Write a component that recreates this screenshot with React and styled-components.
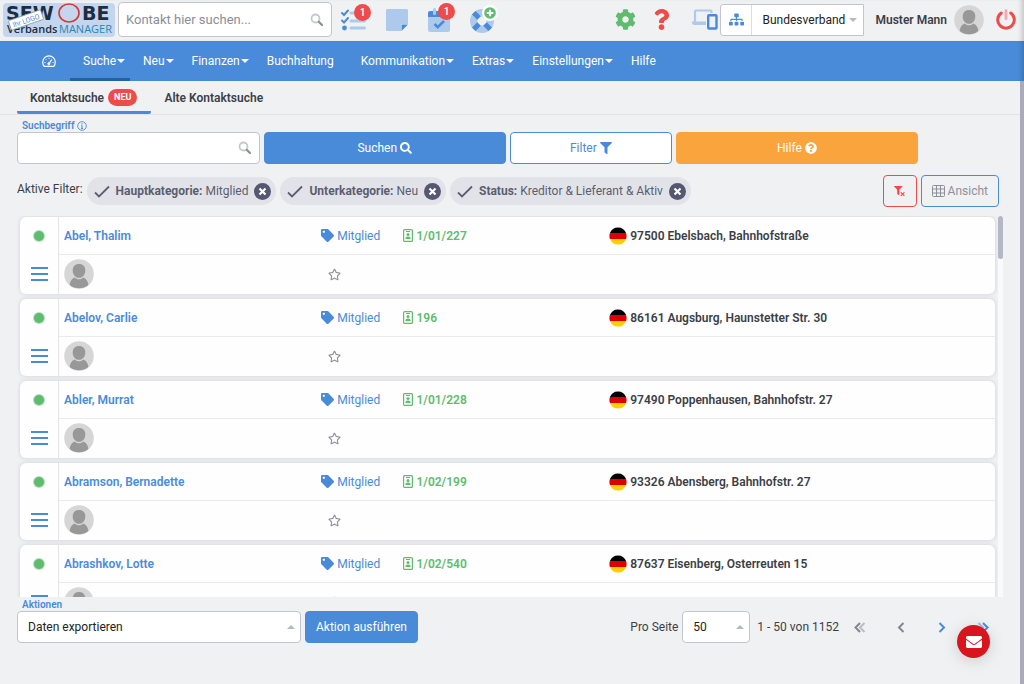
import React from "react";
import styled, { createGlobalStyle, css, ThemeProvider } from "styled-components";
import {
  FaCog,
  FaEnvelope,
  FaFilter,
  FaQuestion,
  FaQuestionCircle,
  FaRegStar,
  FaSearch,
  FaSitemap,
  FaTag,
} from "react-icons/fa";

const theme = {
  blue: "#4a8bd9",
  lightBlue: "#adc9eb",
  darkBlue: "#2560a3",
  red: "#ee4b4b",
  green: "#5fbc6e",
  orange: "#f9a43d",
  page: "#f0f1f3",
  text: "#3c3f46",
  muted: "#5b5e70",
  border: "#c3c4ce",
};

const GlobalStyle = createGlobalStyle`
  * {
    box-sizing: border-box;
  }
  body {
    margin: 0;
    background: #f0f1f3;
    color: #3c3f46;
    font-family: Roboto, "Liberation Sans", sans-serif;
    font-size: 12px;
    line-height: 16px;
  }
  button, input, select {
    font: inherit;
    color: inherit;
    margin: 0;
  }
  button {
    border: 0;
    padding: 0;
    background: none;
    cursor: pointer;
  }
  a {
    color: inherit;
    text-decoration: none;
  }
  svg {
    display: block;
    flex: none;
  }
`;

const Page = styled.div`
  display: flex;
  flex-direction: column;
  height: 100vh;
  overflow: hidden;
`;

/* top bar */

const TopBar = styled.header`
  display: flex;
  align-items: center;
  gap: 3px;
  height: 41px;
  flex: none;
  padding: 0 8px 2px 3px;
  box-shadow: inset -5px 0 5px -3px rgba(0, 0, 0, 0.2);
`;

const SearchBox = styled.div`
  display: flex;
  align-items: center;
  height: ${(props) => (props.$large ? "35px" : "32px")};
  width: ${(props) => (props.$large ? "214px" : "auto")};
  padding: 0 7px;
  border: 1px solid ${(props) => props.theme.border};
  border-radius: 4px;
  background: white;
  font-size: 13px;
`;

const SearchInput = styled.input`
  flex: 1;
  min-width: 0;
  border: 0;
  padding: 0;
  outline: 0;
  background: none;
  &::placeholder {
    color: #8b8e99;
    opacity: 1;
  }
`;

const Shortcuts = styled.div`
  display: flex;
  align-items: center;
  gap: 20px;
  margin-left: 6px;
`;

const Shortcut = styled.button`
  position: relative;
`;

const Count = styled.span`
  position: absolute;
  top: -5px;
  right: -5px;
  width: 17px;
  height: 17px;
  border-radius: 50%;
  background: ${(props) => props.theme.red};
  color: white;
  font-size: 10px;
  font-weight: 600;
  line-height: 17px;
  text-align: center;
`;

const Account = styled.div`
  display: flex;
  align-items: center;
  margin-left: auto;
`;

const Tool = styled.button`
  color: ${(props) => props.theme[props.$color]};
  margin-right: ${(props) => props.$space};
`;

const UnitPicker = styled.div`
  display: flex;
  height: 32px;
  border: 1px solid ${(props) => props.theme.border};
  border-radius: 3px 0 0 3px;
  background: white;
`;

const UnitButton = styled.button`
  display: flex;
  align-items: center;
  justify-content: center;
  width: 31px;
  border-right: 1px solid #dcdde3;
  color: ${(props) => props.theme.blue};
`;

const SelectBox = styled.div`
  position: relative;
  width: ${(props) => props.$width};
  max-width: 100%;
  &::after {
    content: "";
    position: absolute;
    right: 6px;
    top: 50%;
    margin-top: -2px;
    border: 4px solid transparent;
    border-width: ${(props) => (props.$up ? "0 4px 4px" : "4px 4px 0")};
    border-top-color: #b5b7c2;
    border-bottom-color: #b5b7c2;
    pointer-events: none;
  }
`;

const Select = styled.select`
  appearance: none;
  width: 100%;
  height: ${(props) => (props.$plain ? "30px" : "32px")};
  padding: 0 16px 0 10px;
  border: ${(props) => (props.$plain ? "0" : "1px solid " + props.theme.border)};
  border-radius: 4px;
  background: white;
  color: #222;
`;

const UserName = styled.a`
  margin: 0 7px 0 11px;
  font-weight: 600;
`;

/* navigation */

const Nav = styled.nav`
  display: flex;
  flex: none;
  height: 40px;
  padding-left: 29px;
  background: ${(props) => props.theme.blue};
  color: white;
  box-shadow: inset -5px 0 5px -3px rgba(0, 0, 0, 0.2);
`;

const NavLink = styled.a`
  display: flex;
  align-items: center;
  padding: 0 5px 0 13px;
  ${(props) =>
    props.$active &&
    css`
      box-shadow: inset 0 -3px 0 ${props.theme.darkBlue};
    `};
  &::after {
    content: "";
    margin-left: 1px;
    border: 4px solid transparent;
    border-bottom-width: 0;
    border-top-color: ${(props) => (props.$menu ? "white" : "transparent")};
  }
`;

const Body = styled.div`
  display: flex;
  flex: 1;
  min-height: 0;
`;

const PageScroll = styled.div`
  flex: none;
  width: 4px;
  background: #a9abb8;
`;

const Content = styled.div`
  display: flex;
  flex-direction: column;
  flex: 1;
  min-width: 0;
`;

const Tabs = styled.div`
  display: flex;
  flex: none;
  height: 34px;
  padding-left: 17px;
  border-bottom: 1px solid #e2e3e8;
`;

const Tab = styled.a`
  display: flex;
  align-items: center;
  gap: 4px;
  padding: 3px 14px 0 13px;
  font-weight: 600;
  border-bottom: 3px solid ${(props) => (props.$active ? props.theme.blue : "transparent")};
  border-radius: 2px;
`;

const NewBadge = styled.span`
  padding: 0 6px;
  border-radius: 9px;
  background: ${(props) => props.theme.red};
  color: white;
  font-size: 9px;
  font-weight: 700;
  line-height: 17px;
`;

/* search form */

const Main = styled.main`
  display: flex;
  flex-direction: column;
  flex: 1;
  min-height: 0;
  padding: 5px 17px 0;
`;

const Label = styled.label`
  display: flex;
  align-items: center;
  gap: 3px;
  padding-left: 5px;
  color: ${(props) => props.theme.blue};
  font-size: 10px;
  font-weight: 600;
  line-height: 12px;
`;

const SearchForm = styled.form`
  display: grid;
  grid-template-columns: 3fr 3fr 2fr 3fr 1fr;
  column-gap: 4px;
`;

const Button = styled.button`
  display: flex;
  align-items: center;
  justify-content: center;
  gap: 3px;
  height: 32px;
  padding: 0 10px;
  border: 1px solid ${(props) => props.theme[props.$border || props.$fill]};
  border-radius: 4px;
  background: ${(props) => (props.$fill ? props.theme[props.$fill] : "white")};
  color: ${(props) => (props.$color ? props.theme[props.$color] : "white")};
`;

const GhostButton = styled(Button)`
  background: transparent;
  color: #8d909b;
`;

const FilterRow = styled.div`
  display: flex;
  align-items: center;
  gap: 4px;
  margin: 11px 4px 9px 0;
`;

const FilterTitle = styled.span`
  padding-bottom: 4px;
`;

const Spacer = styled.div`
  flex: 1;
`;

const Chip = styled.span`
  display: flex;
  align-items: center;
  gap: 6px;
  height: 28px;
  padding: 0 5px 0 7px;
  border-radius: 14px;
  background: #e2e3e9;
  color: ${(props) => props.theme.muted};
  b {
    font-weight: 700;
  }
`;

/* contact list */

const ListArea = styled.div`
  display: flex;
  flex: 1;
  min-height: 0;
  gap: 3px;
  overflow: hidden;
`;

const ListTrack = styled.div`
  width: 5px;
  background: #fafafb;
`;

const ListThumb = styled.div`
  height: 43px;
  border-radius: 3px;
  background: #b5b7c4;
`;

const ContactList = styled.ul`
  flex: 1;
  min-width: 0;
  margin: 0;
  padding: 1px 0 0 3px;
  list-style: none;
`;

const Card = styled.li`
  display: flex;
  height: 77px;
  margin-bottom: 5px;
  border-radius: 6px;
  background: #fefefe;
  box-shadow: 0 0 4px rgba(60, 65, 90, 0.18);
`;

const CardSide = styled.div`
  display: grid;
  grid-template-rows: 37px 40px;
  justify-items: center;
  align-items: center;
  width: 39px;
  border-right: 1px solid #e4e5e9;
`;

const Status = styled.span`
  width: 10px;
  height: 10px;
  border-radius: 50%;
  background: ${(props) => props.theme.green};
  box-shadow: 0 0 0 1px #b4dfbb;
`;

const MenuButton = styled.button`
  width: 17px;
  height: 14px;
  border-top: 2px solid ${(props) => props.theme.blue};
  border-bottom: 2px solid ${(props) => props.theme.blue};
  background: linear-gradient(${(props) => props.theme.blue}, ${(props) => props.theme.blue}) center / 100% 2px no-repeat;
`;

const CardMain = styled.div`
  flex: 1;
  min-width: 0;
`;

const CardRow = styled.div`
  display: grid;
  grid-template-columns: 50fr 16fr 40fr 75fr;
  align-items: center;
  height: 37px;
  padding-left: 5px;
  white-space: nowrap;
  & + & {
    height: 39px;
    border-top: 1px solid #e9eaed;
  }
`;

const Name = styled.a`
  color: ${(props) => props.theme.blue};
  font-weight: 600;
`;

const Cell = styled.span`
  display: flex;
  align-items: center;
  gap: 3px;
  color: ${(props) => props.theme[props.$color]};
  font-weight: ${(props) => (props.$strong ? 600 : 400)};
`;

const StarButton = styled.button`
  justify-self: start;
  margin-left: 7px;
  color: #8d909b;
`;

/* footer */

const Footer = styled.footer`
  display: flex;
  flex: none;
  align-items: flex-end;
  gap: 4px;
  height: 87px;
  padding: 1px 0 41px;
`;

const PagerInfo = styled.div`
  display: flex;
  align-items: center;
  gap: 4px;
  height: 32px;
  margin-left: auto;
`;

const Range = styled.span`
  margin-left: 3px;
`;

const Pager = styled.div`
  display: flex;
  height: 32px;
  margin-left: -4px;
`;

const PagerButton = styled.button`
  display: flex;
  align-items: center;
  justify-content: center;
  width: 41px;
  color: ${(props) => (props.disabled ? "#84878f" : props.theme.blue)};
`;

const MailButton = styled.button`
  position: fixed;
  right: 34px;
  bottom: 26px;
  display: flex;
  align-items: center;
  justify-content: center;
  width: 33px;
  height: 33px;
  border-radius: 50%;
  background: #d8141f;
  color: white;
  box-shadow: 0 3px 16px rgba(0, 0, 0, 0.15);
`;

const Logo = () => (
  <svg width="112" height="35" viewBox="0 0 112 35" role="img" aria-label="SEWOBE VerbandsMANAGER">
    <rect y="1" width="112" height="34" rx="4" fill="#c3d6ee" />
    <g fontFamily="DejaVu Sans, sans-serif" fontSize="19" fontWeight="700" fill="#1d2d42">
      <text x="3" y="18">SEW</text>
      <text x="79" y="18">BE</text>
    </g>
    <ellipse cx="66" cy="11" rx="10" ry="9" fill="none" stroke="#d9343c" strokeWidth="1.6" />
    <g fontFamily="Open Sans, sans-serif" fontSize="11">
      <text x="4" y="31" fill="#1d2d42" fontWeight="600">Verbands</text>
      <text x="56" y="31" fill="#2787b5">MANAGER</text>
    </g>
    <g transform="rotate(-19 23 18)">
      <rect x="6" y="13" width="34" height="10" rx="1" fill="white" stroke="#8e99a8" strokeWidth="0.8" />
      <text x="23" y="21" textAnchor="middle" fontFamily="Roboto, sans-serif" fontSize="7" fill="#4a8bd9">Ihr LOGO</text>
    </g>
  </svg>
);

const Magnifier = () => (
  <svg width="14" height="14" viewBox="0 0 14 14" fill="none">
    <circle cx="5.5" cy="5.5" r="4" stroke="#c6c8d0" strokeWidth="1.8" />
    <path d="M9 9l3 3" stroke="#8b8e99" strokeWidth="2.2" strokeLinecap="round" />
  </svg>
);

const TasksIcon = () => (
  <svg width="25" height="22" viewBox="0 0 25 22" fill="none">
    <path d="M10 4h13.500M10 12h13.500M10 19h13.500" stroke="#adc9eb" strokeWidth="3" strokeLinecap="round" />
    <path d="M1 4l2 2 4-4.500M1 11.500l2 2L7 9" stroke="#4a8bd9" strokeWidth="2" strokeLinecap="round" />
    <circle cx="3.500" cy="19" r="2.400" fill="#4a8bd9" />
  </svg>
);

const NoteIcon = () => (
  <svg width="22" height="22" viewBox="0 0 22 22">
    <path d="M1.500 0h19A1.500 1.500 0 0 1 22 1.500V15h-7v7H1.500A1.500 1.500 0 0 1 0 20.500v-19A1.500 1.500 0 0 1 1.500 0z" fill="#adc9eb" />
    <path d="M15.500 15.500h6.500l-6.500 6.500z" fill="#4a8bd9" />
  </svg>
);

const CalendarIcon = () => (
  <svg width="22" height="24" viewBox="0 0 22 24">
    <path d="M0 8h22v14a2 2 0 0 1-2 2H2a2 2 0 0 1-2-2z" fill="#adc9eb" />
    <path d="M2 3h18a2 2 0 0 1 2 2v4H0V5a2 2 0 0 1 2-2z" fill="#4a8bd9" />
    <path d="M6.500 1.500v4M15.500 1.500v4" stroke="#adc9eb" strokeWidth="3" strokeLinecap="round" />
    <path d="M6.500 16l3.200 3.200L16 13" stroke="#4a8bd9" strokeWidth="2.500" fill="none" />
  </svg>
);

const RingIcon = () => (
  <svg width="28" height="30" viewBox="0 0 28 30">
    <circle cx="12" cy="16" r="8.300" fill="none" stroke="#adc9eb" strokeWidth="7.400" />
    <g stroke="#4a8bd9" strokeWidth="5">
      <path d="M3.800 7.800l5.200 5.200M15 19l5.200 5.200M3.800 24.200L9 19M15 13l5.200-5.200" />
    </g>
    <circle cx="20" cy="8" r="8" fill="white" />
    <circle cx="20" cy="8" r="5.800" fill="#5fbc6e" />
    <path d="M20 4.700v6.600M16.700 8h6.600" stroke="white" strokeWidth="2" />
  </svg>
);

const DevicesIcon = () => (
  <svg width="26" height="21" viewBox="0 0 26 21" fill="none">
    <path d="M3 14V2.500A1 1 0 0 1 4 1.500h14.500a1 1 0 0 1 1 1V4" stroke="#adc9eb" strokeWidth="2.200" />
    <path d="M0 12.500h14v3.500H2.500A2.500 2.500 0 0 1 0 13.500z" fill="#adc9eb" />
    <rect x="16.200" y="6.200" width="8.300" height="13.300" rx="0.800" stroke="#4a8bd9" strokeWidth="2.400" />
  </svg>
);

const Avatar = () => (
  <svg width="30" height="30" viewBox="0 0 30 30">
    <circle cx="15" cy="15" r="14.800" fill="#d6d6d6" />
    <path d="M15 5c4 0 6.300 2.600 6.300 6.500 0 4-2.500 7.300-6.300 7.300s-6.300-3.300-6.300-7.300C8.700 7.600 11 5 15 5z" fill="#989898" />
    <path d="M10.500 18.500c1.300 1.200 2.800 1.800 4.500 1.800s3.200-.6 4.500-1.800c3 1.200 4.500 4 4.800 7.500a14.800 14.800 0 0 1-18.600 0c.3-3.500 1.800-6.300 4.800-7.500z" fill="#989898" />
  </svg>
);

const PowerIcon = () => (
  <svg width="20" height="21" viewBox="0 0 20 21" fill="none" strokeLinecap="round">
    <path d="M5.300 4A8.300 8.300 0 1 0 14.700 4" stroke="#ee4b4b" strokeWidth="3" />
    <path d="M10 1.700v8" stroke="#f5a9a9" strokeWidth="2.800" />
  </svg>
);

const GaugeIcon = () => (
  <svg width="14" height="12" viewBox="0 0 14 12" fill="none" stroke="white">
    <path d="M2.200 11.300A6.300 6.300 0 1 1 11.800 11.300z" strokeWidth="1.200" strokeLinejoin="round" />
    <path d="M6.800 8.800L9.800 4.500" strokeWidth="1.200" />
    <circle cx="6.800" cy="8.800" r="1" fill="white" />
    <path d="M2.500 7.500h1M3.800 4.200l.7.700M7 2.800v1M10.500 7.500h1" />
  </svg>
);

const InfoIcon = () => (
  <svg width="10" height="10" viewBox="0 0 10 10" fill="none" stroke="#4a8bd9">
    <circle cx="5" cy="5" r="4.300" strokeWidth="0.900" />
    <path d="M5 2.200v1.200M4.300 4.400H5v3M4 7.400h2" />
  </svg>
);

const CheckIcon = () => (
  <svg width="16" height="13" viewBox="0 0 16 13" fill="none">
    <path d="M1 7.500l4 4L15 1.500" stroke="#5b5e70" strokeWidth="1.800" />
  </svg>
);

const CloseIcon = () => (
  <svg width="17" height="17" viewBox="0 0 17 17">
    <circle cx="8.500" cy="8.500" r="8.500" fill="#555870" />
    <path d="M5.500 5.500l6 6M11.500 5.500l-6 6" stroke="white" strokeWidth="2.200" />
  </svg>
);

const ClearFilterIcon = () => (
  <svg width="12" height="11" viewBox="0 0 12 11">
    <path d="M.3 0h7.900c.3 0 .4.400.2.600L5.400 3.800V9.500L3.200 8V3.800L.1.600C-.1.400 0 0 .3 0z" fill="#ee4b4b" />
    <path d="M6.800 6.300l3.600 3.600M10.400 6.300L6.800 9.900" stroke="#ee4b4b" strokeWidth="1.200" />
  </svg>
);

const TableIcon = () => (
  <svg width="13" height="12" viewBox="0 0 13 12" fill="none" stroke="#8d909b">
    <rect x="0.500" y="0.500" width="12" height="11" rx="1" />
    <path d="M.5 4h12M.5 8h12M4.500.5v11M8.500.5v11" />
  </svg>
);

const BadgeIcon = () => (
  <svg width="10" height="13" viewBox="0 0 10 13" fill="none">
    <rect x="0.600" y="0.600" width="8.800" height="11.800" rx="1" stroke="#5fbc6e" strokeWidth="1.200" />
    <path d="M3 2.500h4" stroke="#5fbc6e" />
    <circle cx="5" cy="5.500" r="1.500" fill="#5fbc6e" />
    <path d="M2.400 10c0-1.600 1-2.400 2.600-2.400s2.600.8 2.600 2.400z" fill="#5fbc6e" />
  </svg>
);

const GermanFlag = () => (
  <svg width="18" height="18" viewBox="0 0 18 18" role="img" aria-label="Deutschland">
    <path d="M.95 6a8.600 8.600 0 0 1 16.100 0z" fill="#000" />
    <path d="M.95 6h16.100a8.600 8.600 0 0 1 0 6H.95a8.600 8.600 0 0 1 0-6z" fill="#dd0000" />
    <path d="M.95 12a8.600 8.600 0 0 0 16.100 0z" fill="#ffce00" />
  </svg>
);

const Chevron = ({ double, left }) => (
  <svg width="12" height="11" viewBox="0 0 12 11" fill="none" stroke="currentColor" strokeWidth="2">
    <g transform={left ? "rotate(180 6 5.500)" : undefined}>
      {double && <path d="M1.500 1l4.500 4.500L1.500 10" opacity="0.500" />}
      <path d={double ? "M6 1l4.500 4.500L6 10" : "M3.500 1L8 5.500 3.500 10"} />
    </g>
  </svg>
);

const navItems = [
  { label: "Suche", menu: true, active: true },
  { label: "Neu", menu: true },
  { label: "Finanzen", menu: true },
  { label: "Buchhaltung" },
  { label: "Kommunikation", menu: true },
  { label: "Extras", menu: true },
  { label: "Einstellungen", menu: true },
  { label: "Hilfe" },
];

const filters = [
  { name: "Hauptkategorie", value: "Mitglied" },
  { name: "Unterkategorie", value: "Neu" },
  { name: "Status", value: "Kreditor & Lieferant & Aktiv" },
];

const contacts = [
  { name: "Abel, Thalim", number: "1/01/227", address: "97500 Ebelsbach, Bahnhofstraße" },
  { name: "Abelov, Carlie", number: "196", address: "86161 Augsburg, Haunstetter Str. 30" },
  { name: "Abler, Murrat", number: "1/01/228", address: "97490 Poppenhausen, Bahnhofstr. 27" },
  { name: "Abramson, Bernadette", number: "1/02/199", address: "93326 Abensberg, Bahnhofstr. 27" },
  { name: "Abrashkov, Lotte", number: "1/02/540", address: "87637 Eisenberg, Osterreuten 15" },
];

const Header = () => (
  <TopBar>
    <a href="#start">
      <Logo />
    </a>
    <SearchBox $large>
      <SearchInput type="text" placeholder="Kontakt hier suchen..." aria-label="Kontakt suchen" />
      <Magnifier />
    </SearchBox>
    <Shortcuts>
      <Shortcut aria-label="Aufgaben">
        <TasksIcon />
        <Count>1</Count>
      </Shortcut>
      <Shortcut aria-label="Notizen">
        <NoteIcon />
      </Shortcut>
      <Shortcut aria-label="Termine">
        <CalendarIcon />
        <Count>1</Count>
      </Shortcut>
      <Shortcut aria-label="Support">
        <RingIcon />
      </Shortcut>
    </Shortcuts>
    <Account>
      <Tool $color="green" $space="15px" aria-label="Optionen">
        <FaCog size={21} />
      </Tool>
      <Tool $color="red" $space="20px" aria-label="Hilfe">
        <FaQuestion size={21} />
      </Tool>
      <Tool $color="blue" $space="2px" aria-label="Geräte">
        <DevicesIcon />
      </Tool>
      <UnitPicker>
        <UnitButton aria-label="Struktur">
          <FaSitemap size={15} />
        </UnitButton>
        <SelectBox $width="111px">
          <Select $plain aria-label="Verband">
            <option>Bundesverband</option>
          </Select>
        </SelectBox>
      </UnitPicker>
      <UserName href="#profil">Muster Mann</UserName>
      <Tool $color="text" $space="12px" aria-label="Profil">
        <Avatar />
      </Tool>
      <Tool $color="red" $space="0" aria-label="Abmelden">
        <PowerIcon />
      </Tool>
    </Account>
  </TopBar>
);

const Contact = ({ name, number, address }) => (
  <Card>
    <CardSide>
      <Status />
      <MenuButton aria-label="Menü" />
    </CardSide>
    <CardMain>
      <CardRow>
        <Name href="#kontakt">{name}</Name>
        <Cell $color="blue">
          <FaTag size={13} />
          Mitglied
        </Cell>
        <Cell $color="green" $strong>
          <BadgeIcon />
          {number}
        </Cell>
        <Cell $color="text" $strong>
          <GermanFlag />
          {address}
        </Cell>
      </CardRow>
      <CardRow>
        <Avatar />
        <StarButton aria-label="Favorit">
          <FaRegStar size={13} />
        </StarButton>
      </CardRow>
    </CardMain>
  </Card>
);

const App = () => {
  return (
    <ThemeProvider theme={theme}>
      <GlobalStyle />
      <Page>
        <Header />
        <Nav>
          <NavLink href="#dashboard" aria-label="Dashboard">
            <GaugeIcon />
          </NavLink>
          {navItems.map((item) => (
            <NavLink key={item.label} href="#menu" $menu={item.menu} $active={item.active}>
              {item.label}
            </NavLink>
          ))}
        </Nav>
        <Body>
          <Content>
            <Tabs>
              <Tab href="#kontaktsuche" $active>
                Kontaktsuche <NewBadge>NEU</NewBadge>
              </Tab>
              <Tab href="#alte-kontaktsuche">Alte Kontaktsuche</Tab>
            </Tabs>
            <Main>
              <Label htmlFor="suchbegriff">
                Suchbegriff <InfoIcon />
              </Label>
              <SearchForm onSubmit={(e) => e.preventDefault()}>
                <SearchBox>
                  <SearchInput id="suchbegriff" type="text" />
                  <Magnifier />
                </SearchBox>
                <Button type="submit" $fill="blue">
                  Suchen <FaSearch size={12} />
                </Button>
                <Button type="button" $border="blue" $color="blue">
                  Filter <FaFilter size={12} />
                </Button>
                <Button type="button" $fill="orange">
                  Hilfe <FaQuestionCircle size={12} />
                </Button>
              </SearchForm>
              <FilterRow>
                <FilterTitle>Aktive Filter:</FilterTitle>
                {filters.map((filter) => (
                  <Chip key={filter.name}>
                    <CheckIcon />
                    <span>
                      <b>{filter.name}:</b> {filter.value}
                    </span>
                    <button aria-label={`${filter.name} entfernen`}>
                      <CloseIcon />
                    </button>
                  </Chip>
                ))}
                <Spacer />
                <GhostButton $border="red" aria-label="Filter löschen">
                  <ClearFilterIcon />
                </GhostButton>
                <GhostButton $border="blue">
                  <TableIcon />
                  Ansicht
                </GhostButton>
              </FilterRow>
              <ListArea>
                <ContactList>
                  {contacts.map((contact) => (
                    <Contact key={contact.name} {...contact} />
                  ))}
                </ContactList>
                <ListTrack>
                  <ListThumb />
                </ListTrack>
              </ListArea>
              <Footer>
                <div>
                  <Label htmlFor="aktionen">Aktionen</Label>
                  <SelectBox $width="284px" $up>
                    <Select id="aktionen">
                      <option>Daten exportieren</option>
                    </Select>
                  </SelectBox>
                </div>
                <Button $fill="blue">Aktion ausführen</Button>
                <PagerInfo>
                  <label htmlFor="pro-seite">Pro Seite</label>
                  <SelectBox $width="68px" $up>
                    <Select id="pro-seite">
                      <option>50</option>
                    </Select>
                  </SelectBox>
                  <Range>1 - 50 von 1152</Range>
                </PagerInfo>
                <Pager>
                  <PagerButton disabled aria-label="Erste Seite">
                    <Chevron double left />
                  </PagerButton>
                  <PagerButton disabled aria-label="Vorherige Seite">
                    <Chevron left />
                  </PagerButton>
                  <PagerButton aria-label="Nächste Seite">
                    <Chevron />
                  </PagerButton>
                  <PagerButton aria-label="Letzte Seite">
                    <Chevron double />
                  </PagerButton>
                </Pager>
              </Footer>
            </Main>
          </Content>
          <PageScroll />
        </Body>
        <MailButton aria-label="Nachricht">
          <FaEnvelope size={16} />
        </MailButton>
      </Page>
    </ThemeProvider>
  );
};

export default App;
